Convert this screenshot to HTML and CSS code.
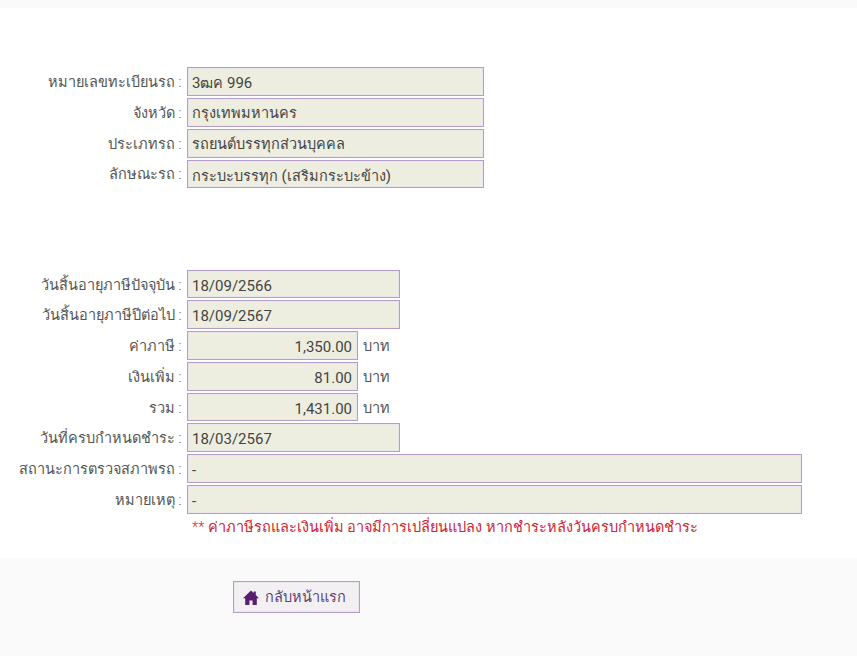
FILE: index.html
```html
<!DOCTYPE html>
<html lang="th">
<head>
<meta charset="utf-8">
<title>ผลการตรวจสอบ</title>
<link rel="stylesheet" href="styles.css">
</head>
<body>
<div class="band-top"></div>
<main class="content">
  <section class="group group-car">
    <div class="row"><span class="label">หมายเลขทะเบียนรถ :</span><span class="field w-car"><span class="num">3</span>ฒค <span class="num">996</span></span></div>
    <div class="row"><span class="label">จังหวัด :</span><span class="field w-car">กรุงเทพมหานคร</span></div>
    <div class="row"><span class="label">ประเภทรถ :</span><span class="field w-car">รถยนต์บรรทุกส่วนบุคคล</span></div>
    <div class="row"><span class="label">ลักษณะรถ :</span><span class="field w-car">กระบะบรรทุก <span class="num">(</span>เสริมกระบะข้าง<span class="num">)</span></span></div>
  </section>
  <section class="group group-tax">
    <div class="row"><span class="label">วันสิ้นอายุภาษีปัจจุบัน :</span><span class="field w-date num">18/09/2566</span></div>
    <div class="row"><span class="label">วันสิ้นอายุภาษีปีต่อไป :</span><span class="field w-date num">18/09/2567</span></div>
    <div class="row"><span class="label">ค่าภาษี :</span><span class="field w-money num">1,350.00</span><span class="unit">บาท</span></div>
    <div class="row"><span class="label">เงินเพิ่ม :</span><span class="field w-money num">81.00</span><span class="unit">บาท</span></div>
    <div class="row"><span class="label">รวม :</span><span class="field w-money num">1,431.00</span><span class="unit">บาท</span></div>
    <div class="row"><span class="label">วันที่ครบกำหนดชำระ :</span><span class="field w-date num">18/03/2567</span></div>
    <div class="row"><span class="label">สถานะการตรวจสภาพรถ :</span><span class="field w-wide num">-</span></div>
    <div class="row"><span class="label">หมายเหตุ :</span><span class="field w-wide num">-</span></div>
    <p class="note">** ค่าภาษีรถและเงินเพิ่ม อาจมีการเปลี่ยนแปลง หากชำระหลังวันครบกำหนดชำระ</p>
  </section>
</main>
<footer class="band-bottom">
  <a class="btn" href="#">
    <svg class="home" viewBox="0 0 16 15" width="16" height="15" aria-hidden="true"><path d="M8 0.5 L10.6 3 L10.6 1.4 L12.8 1.4 L12.8 5.1 L16 8.2 L13.8 8.2 L13.8 15 L9.6 15 L9.6 10.4 L6.4 10.4 L6.4 15 L2.2 15 L2.2 8.2 L0 8.2 Z"/></svg>
    <span class="btn-text">กลับหน้าแรก</span>
  </a>
</footer>
</body>
</html>
```
FILE: styles.css
```css
html, body { margin: 0; padding: 0; }
body {
  width: 857px;
  height: 656px;
  overflow: hidden;
  background: #fff;
  color: #444;
  font-family: Roboto, "Noto Sans", sans-serif;
  font-size: 14.5px;
  font-weight: 300;
}
.num { font-size: 15px; font-weight: 400; }
.band-top { height: 8px; background: #fafafa; }
.content { height: 550px; display: flex; flex-direction: column; }
.group { display: flex; flex-direction: column; gap: 2px; }
.group-car { margin-top: 59.3px; }
.group-tax { margin-top: 81.4px; }
.row { display: flex; align-items: center; height: 28.75px; }
.label {
  width: 181.5px;
  margin-right: 5px;
  text-align: right;
  white-space: nowrap;
  color: #555;
}
.field {
  box-sizing: border-box;
  height: 28.75px;
  line-height: 28px;
  padding: 1px 5px 0 4.5px;
  background: #eeeee0;
  border: 1px solid #b49ccb;
  box-shadow: inset 0 0 0 1px #ebe6ec;
  color: #444;
  white-space: nowrap;
}
.w-car { width: 297.5px; }
.w-date { width: 213.5px; }
.w-money { width: 171.5px; text-align: right; }
.w-wide { width: 615.5px; }
.unit { margin-left: 5px; color: #555; }
.note {
  margin: 0 0 0 192px;
  line-height: 24px;
  color: #cf2233;
  white-space: nowrap;
}
.band-bottom { height: 98px; background: #fafafa; padding: 23px 0 0 233px; box-sizing: border-box; }
.btn {
  box-sizing: border-box;
  display: inline-flex;
  align-items: center;
  gap: 6px;
  width: 127px;
  height: 32px;
  padding-left: 9px;
  background: #f2f0f2;
  border: 1px solid #b49ccb;
  box-shadow: inset 0 0 0 1px #ebe6ec;
  color: #5f4472;
  text-decoration: none;
}
.btn-text { margin-top: -2px; }
.home { fill: #5a1e6e; flex: none; }
```
